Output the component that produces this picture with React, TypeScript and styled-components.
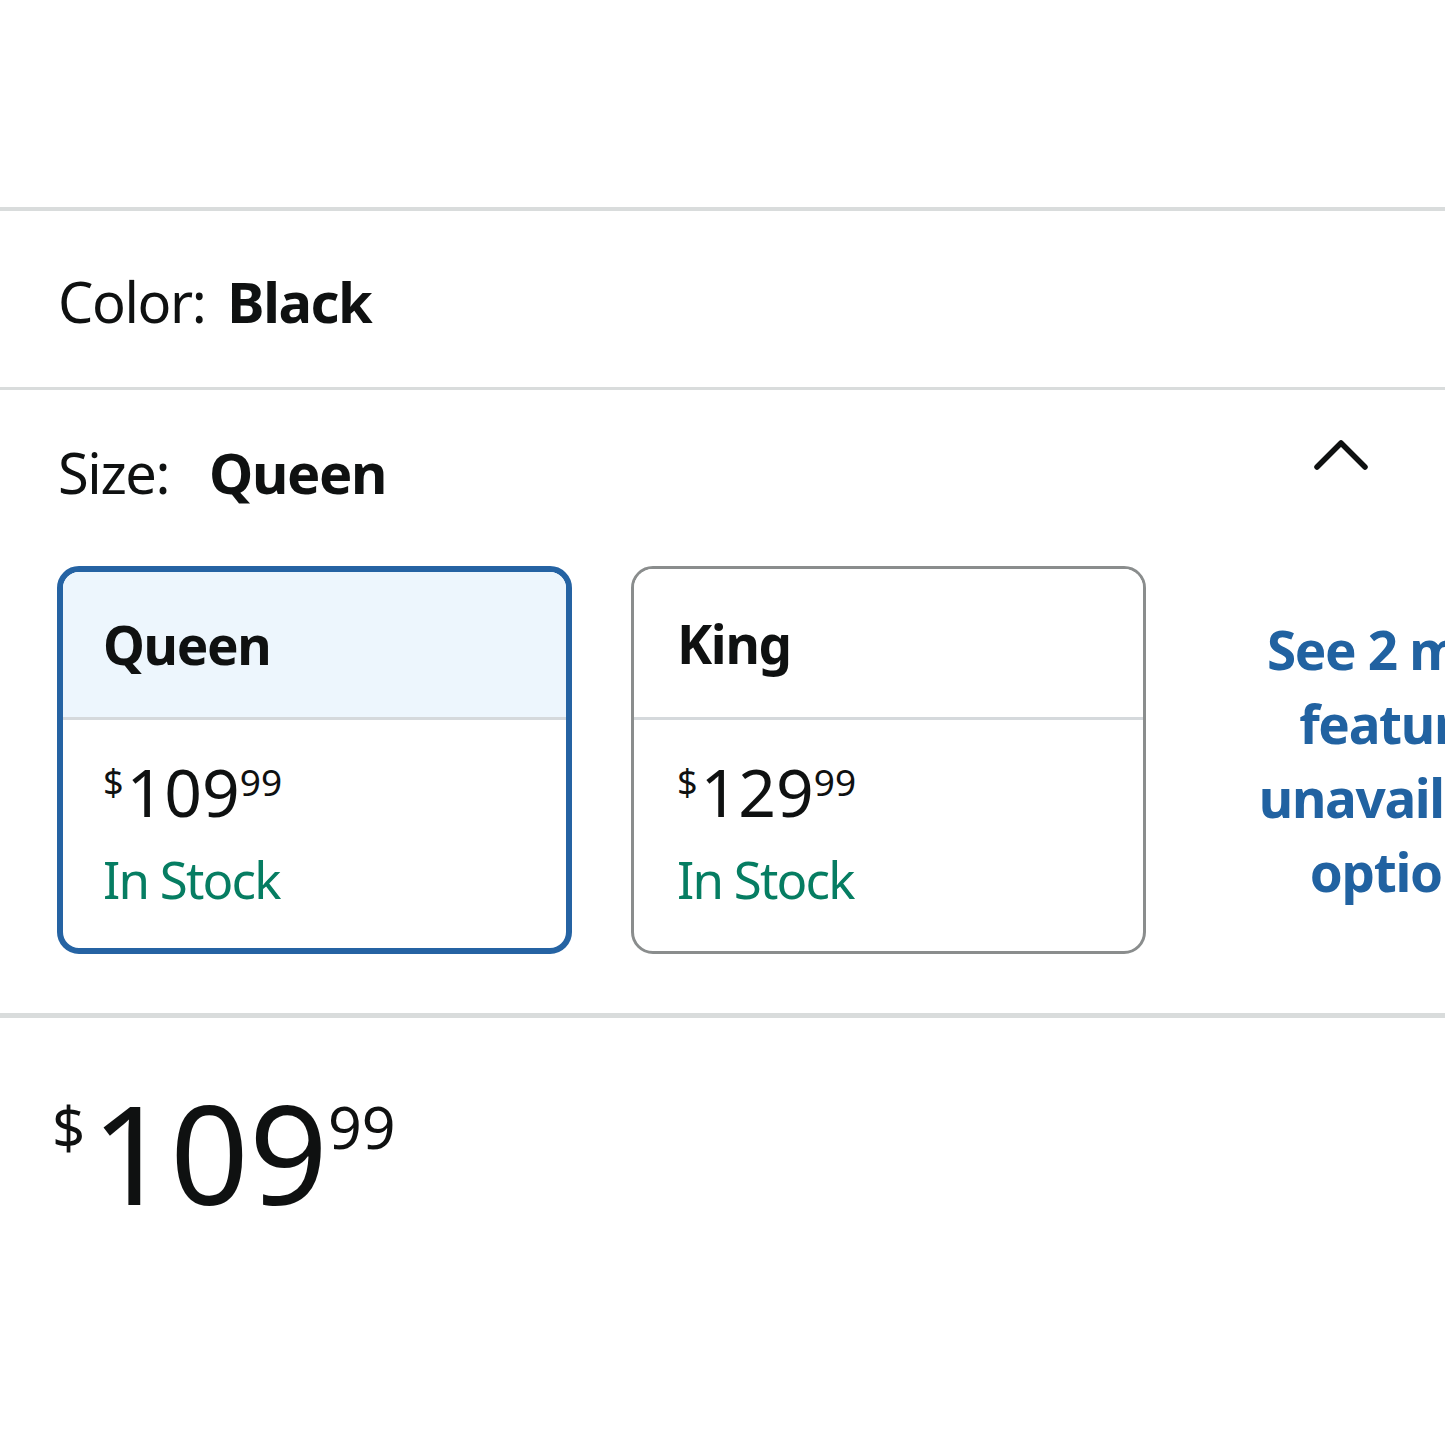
import React from "react";
import styled, { createGlobalStyle } from "styled-components";

const Global = createGlobalStyle`
  html, body {
    margin: 0;
    padding: 0;
    background: #ffffff;
    overflow: hidden;
  }
  body {
    font-family: "Noto Sans", "Open Sans", Arial, sans-serif;
    color: #0f1111;
  }
`;

const Page = styled.div`
  width: 1445px;
  padding-top: 207px;
  display: flex;
  flex-direction: column;
`;

const Divider = styled.div<{ $h: number }>`
  height: ${(p) => p.$h}px;
  background: #d9dcdc;
  width: 100%;
`;

const ColorRow = styled.div`
  height: 176px;
  display: flex;
  align-items: center;
  padding: 4px 0 0 58px;
  box-sizing: border-box;
  font-size: 56px;
  line-height: 70px;
  letter-spacing: -0.025em;
`;

const Label = styled.span<{ $gap: number }>`
  font-weight: 400;
  margin-right: ${(p) => p.$gap}px;
`;

const Value = styled.span`
  font-weight: 700;
`;

const SizeSection = styled.section`
  padding: 47px 0 59px 0;
  display: flex;
  flex-direction: column;
`;

const SizeHeader = styled.div`
  display: flex;
  justify-content: space-between;
  align-items: flex-start;
  padding: 0 76px 0 58px;
  font-size: 56px;
  line-height: 70px;
  letter-spacing: -0.025em;
`;

const Chevron = styled.svg`
  width: 56px;
  height: 40px;
  margin-top: -2px;
`;

const CardsRow = styled.div`
  display: flex;
  gap: 59px;
  margin-top: 59px;
  padding-left: 57px;
`;

const Card = styled.div<{ $selected?: boolean }>`
  flex: 0 0 auto;
  width: 515px;
  height: 388px;
  box-sizing: border-box;
  border: ${(p) => (p.$selected ? "6px solid #2563a3" : "3px solid #8a8d8d")};
  border-radius: 22px;
  overflow: hidden;
  display: flex;
  flex-direction: column;
  background: #fff;
`;

const CardHead = styled.div<{ $selected?: boolean }>`
  height: ${(p) => (p.$selected ? 145 : 148)}px;
  flex: 0 0 auto;
  background: ${(p) => (p.$selected ? "#edf6fd" : "#ffffff")};
  border-bottom: 3px solid #d5d9dc;
  display: flex;
  align-items: center;
  padding-left: ${(p) => (p.$selected ? 40 : 43)}px;
  font-size: 53px;
  font-weight: 700;
  letter-spacing: -0.025em;
`;

const CardBody = styled.div<{ $selected?: boolean }>`
  padding: 38px 0 0 ${(p) => (p.$selected ? 40 : 43)}px;
  display: flex;
  flex-direction: column;
`;

const PriceLine = styled.div<{ $h: number }>`
  display: flex;
  align-items: flex-start;
  height: ${(p) => p.$h}px;
`;

const Sym = styled.span<{ $size: number; $top: number; $right?: number }>`
  font-size: ${(p) => p.$size}px;
  line-height: 1;
  margin-top: ${(p) => p.$top}px;
  margin-right: ${(p) => p.$right ?? 0}px;
`;

const Whole = styled.span<{ $size: number }>`
  font-size: ${(p) => p.$size}px;
  line-height: 1;
`;

const Stock = styled.div`
  color: #067d62;
  font-size: 51px;
  line-height: 66px;
  margin-top: 8px;
  letter-spacing: -0.035em;
`;

const MoreLink = styled.div`
  flex: 0 0 400px;
  display: flex;
  align-items: center;
  justify-content: center;
  text-align: center;
  color: #2162a1;
  font-weight: 700;
  font-size: 53px;
  line-height: 74px;
  padding-top: 2px;
  letter-spacing: -0.025em;
`;

const BigPrice = styled.div`
  padding: 64px 0 0 52px;
`;

type Opt = { name: string; whole: string; frac: string; selected?: boolean };

const options: Opt[] = [
  { name: "Queen", whole: "109", frac: "99", selected: true },
  { name: "King", whole: "129", frac: "99" },
];

export default function App() {
  return (
    <>
      <Global />
      <Page>
        <Divider $h={4} />
        <ColorRow>
          <Label $gap={22}>Color:</Label>
          <Value>Black</Value>
        </ColorRow>
        <Divider $h={3} />
        <SizeSection>
          <SizeHeader>
            <div>
              <Label $gap={40}>Size:</Label>
              <Value>Queen</Value>
            </div>
            <Chevron viewBox="0 0 56 40" fill="none">
              <polyline
                points="4,32 28,8 52,32"
                stroke="#0f1111"
                strokeWidth="5.5"
                strokeLinecap="round"
                strokeLinejoin="round"
              />
            </Chevron>
          </SizeHeader>
          <CardsRow>
            {options.map((o) => (
              <Card key={o.name} $selected={o.selected}>
                <CardHead $selected={o.selected}>{o.name}</CardHead>
                <CardBody $selected={o.selected}>
                  <PriceLine $h={80}>
                    <Sym $size={36} $top={6} $right={3}>$</Sym>
                    <Whole $size={66}>{o.whole}</Whole>
                    <Sym $size={37} $top={5} $right={0}>{o.frac}</Sym>
                  </PriceLine>
                  <Stock>In Stock</Stock>
                </CardBody>
              </Card>
            ))}
            <MoreLink>See 2 more features unavailable options</MoreLink>
          </CardsRow>
        </SizeSection>
        <Divider $h={5} />
        <BigPrice>
          <PriceLine $h={160}>
            <Sym $size={58} $top={16} $right={6}>$</Sym>
            <Whole $size={138}>109</Whole>
            <Sym $size={59} $top={15} $right={0}>99</Sym>
          </PriceLine>
        </BigPrice>
      </Page>
    </>
  );
}
